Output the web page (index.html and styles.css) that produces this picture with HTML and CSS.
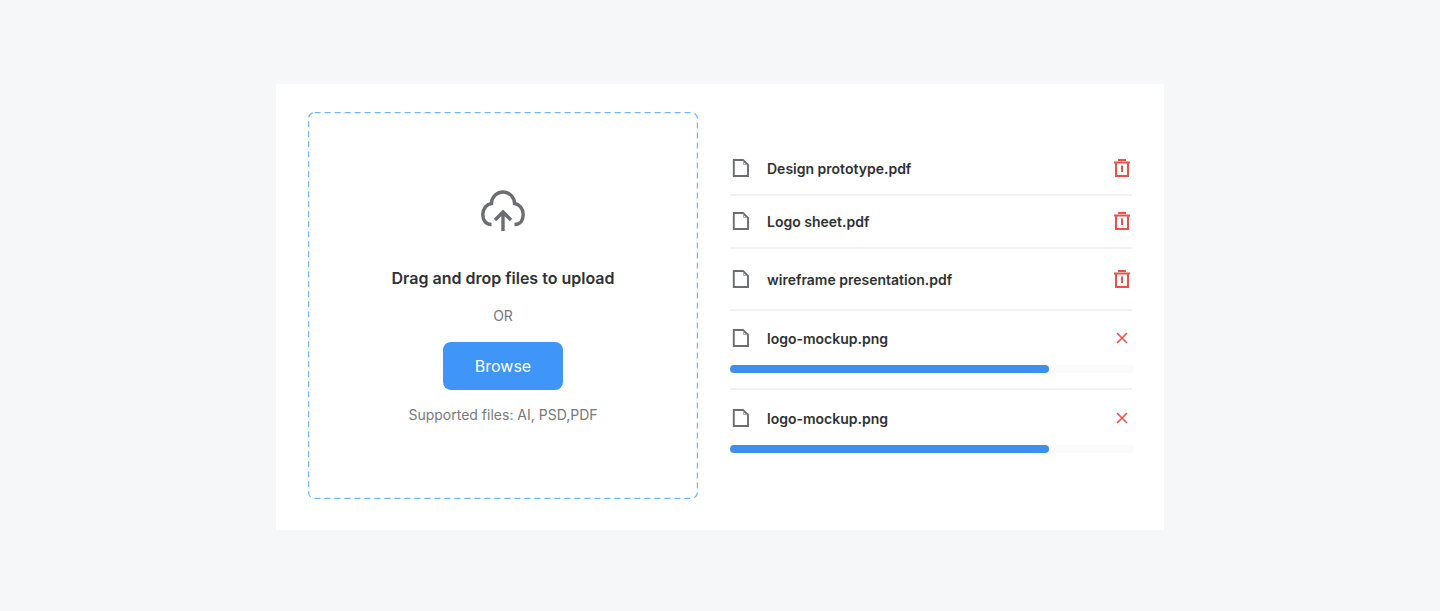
FILE: index.html
```html
<!DOCTYPE html>
<html lang="en">
<head>
  <meta charset="UTF-8">
  <meta name="viewport" content="width=device-width, initial-scale=1.0">
  <title>File upload</title>
  <link rel="stylesheet" href="styles.css">
</head>
<body>
  <main class="card">
    <section class="dropzone">
      <svg class="dash-frame" width="390" height="387" viewBox="0 0 390 387" fill="none">
        <rect x="0.6" y="0.6" width="388.8" height="385.8" rx="6" stroke="#74b6f3" stroke-width="1.2" stroke-dasharray="6 4"/>
      </svg>
      <svg class="cloud-icon" width="46" height="44" viewBox="0 0 46 44" fill="none">
        <path d="M11.5 36.5C5 36.5 2.8 31 2.8 26.5C2.8 20.5 7 16 11.5 15.5A11.5 11.5 0 0 1 34.5 15.5C39 16 43.2 20.5 43.2 26.5C43.2 31 41 36.5 34.5 36.5" stroke="#6b6d70" stroke-width="3.4"/>
        <path d="M23 43V25M15 32L23 24L31 32" stroke="#6b6d70" stroke-width="3.4"/>
      </svg>
      <h2 class="drop-title">Drag and drop files to upload</h2>
      <p class="drop-or">OR</p>
      <button class="browse">Browse</button>
      <p class="drop-note">Supported files: AI, PSD,PDF</p>
    </section>

    <section class="file-list">
      <div class="file-row row-first">
        <div class="file-line">
          <svg class="file-icon" width="18" height="18" viewBox="0 0 18 18" fill="none"><path d="M1.8 1H11L16 6V17H1.8V1Z" stroke="#6b6d70" stroke-width="1.9"/><path d="M11.5 2V5.5H15" stroke="#a9abad"/></svg>
          <span class="file-name">Design prototype.pdf</span>
          <svg class="trash-icon" width="18" height="18" viewBox="0 0 18 18" fill="none"><path d="M1 3.5H17M5 1H13M3 3.5V17H15V3.5M9 6.5V13" stroke="#e5534b" stroke-width="2"/></svg>
        </div>
      </div>
      <div class="file-row row-second">
        <div class="file-line">
          <svg class="file-icon" width="18" height="18" viewBox="0 0 18 18" fill="none"><path d="M1.8 1H11L16 6V17H1.8V1Z" stroke="#6b6d70" stroke-width="1.9"/><path d="M11.5 2V5.5H15" stroke="#a9abad"/></svg>
          <span class="file-name">Logo sheet.pdf</span>
          <svg class="trash-icon" width="18" height="18" viewBox="0 0 18 18" fill="none"><path d="M1 3.5H17M5 1H13M3 3.5V17H15V3.5M9 6.5V13" stroke="#e5534b" stroke-width="2"/></svg>
        </div>
      </div>
      <div class="file-row row-third">
        <div class="file-line">
          <svg class="file-icon" width="18" height="18" viewBox="0 0 18 18" fill="none"><path d="M1.8 1H11L16 6V17H1.8V1Z" stroke="#6b6d70" stroke-width="1.9"/><path d="M11.5 2V5.5H15" stroke="#a9abad"/></svg>
          <span class="file-name">wireframe presentation.pdf</span>
          <svg class="trash-icon" width="18" height="18" viewBox="0 0 18 18" fill="none"><path d="M1 3.5H17M5 1H13M3 3.5V17H15V3.5M9 6.5V13" stroke="#e5534b" stroke-width="2"/></svg>
        </div>
      </div>
      <div class="file-row row-upload">
        <div class="file-line">
          <svg class="file-icon" width="18" height="18" viewBox="0 0 18 18" fill="none"><path d="M1.8 1H11L16 6V17H1.8V1Z" stroke="#6b6d70" stroke-width="1.9"/><path d="M11.5 2V5.5H15" stroke="#a9abad"/></svg>
          <span class="file-name">logo-mockup.png</span>
          <svg class="close-icon" width="18" height="18" viewBox="0 0 18 18" fill="none"><path d="M4 4L14 14M14 4L4 14" stroke="#e5534b" stroke-width="1.6"/></svg>
        </div>
        <div class="progress"><div class="progress-bar" style="width: 79%"></div></div>
      </div>
      <div class="file-row row-upload row-last">
        <div class="file-line">
          <svg class="file-icon" width="18" height="18" viewBox="0 0 18 18" fill="none"><path d="M1.8 1H11L16 6V17H1.8V1Z" stroke="#6b6d70" stroke-width="1.9"/><path d="M11.5 2V5.5H15" stroke="#a9abad"/></svg>
          <span class="file-name">logo-mockup.png</span>
          <svg class="close-icon" width="18" height="18" viewBox="0 0 18 18" fill="none"><path d="M4 4L14 14M14 4L4 14" stroke="#e5534b" stroke-width="1.6"/></svg>
        </div>
        <div class="progress"><div class="progress-bar" style="width: 79%"></div></div>
      </div>
    </section>
  </main>
</body>
</html>
```

FILE: styles.css
```css
body {
  margin: 0;
  padding-top: 84px;
  background-color: #f6f7f9;
  font-family: Inter, Arial, sans-serif;
  color: #2f3134;
}
.card {
  box-sizing: border-box;
  display: flex;
  gap: 32px;
  width: 888px;
  height: 446px;
  margin: 0 auto;
  padding: 28px 32px;
  background-color: #fff;
}
.dropzone {
  box-sizing: border-box;
  position: relative;
  display: flex;
  flex-direction: column;
  align-items: center;
  width: 390px;
  height: 387px;
  padding-top: 76px;
}
.dash-frame {
  position: absolute;
  top: 0;
  left: 0;
}
.cloud-icon {
  display: block;
}
.drop-title {
  margin: 34px 0 0;
  font-size: 16px;
  font-weight: 600;
  line-height: 24px;
}
.drop-or {
  margin: 16px 0 0;
  font-size: 14px;
  line-height: 20px;
  color: #77797c;
}
.browse {
  width: 120px;
  height: 48px;
  margin-top: 16px;
  border: none;
  border-radius: 8px;
  background-color: #3f96f8;
  color: #fff;
  font-family: inherit;
  font-size: 16px;
  font-weight: 400;
}
.drop-note {
  margin: 15px 0 0;
  font-size: 14px;
  line-height: 20px;
  color: #77797c;
}
.file-list {
  width: 402px;
  padding-top: 30px;
}
.file-row {
  border-bottom: 2px solid #f1f2f4;
}
.row-first {
  padding: 14px 0;
}
.row-second {
  padding: 13px 0 14px;
}
.row-third {
  padding: 18px 0;
}
.row-upload {
  padding: 15px 0;
}
.row-last {
  padding-top: 16px;
  border-bottom: none;
}
.file-line {
  display: flex;
  align-items: center;
  height: 24px;
  padding-left: 2px;
}
.file-icon {
  flex: none;
}
.file-name {
  flex: 1;
  margin-left: 17px;
  padding-top: 1px;
  font-size: 14px;
  font-weight: 600;
  line-height: 24px;
}
.trash-icon,
.close-icon {
  flex: none;
  margin-right: 1px;
}
.progress {
  width: 404px;
  height: 8px;
  margin-top: 15px;
  border-radius: 4px;
  background-color: #fafbfb;
}
.progress-bar {
  height: 8px;
  border-radius: 4px;
  background-color: #3f8fee;
}
```
